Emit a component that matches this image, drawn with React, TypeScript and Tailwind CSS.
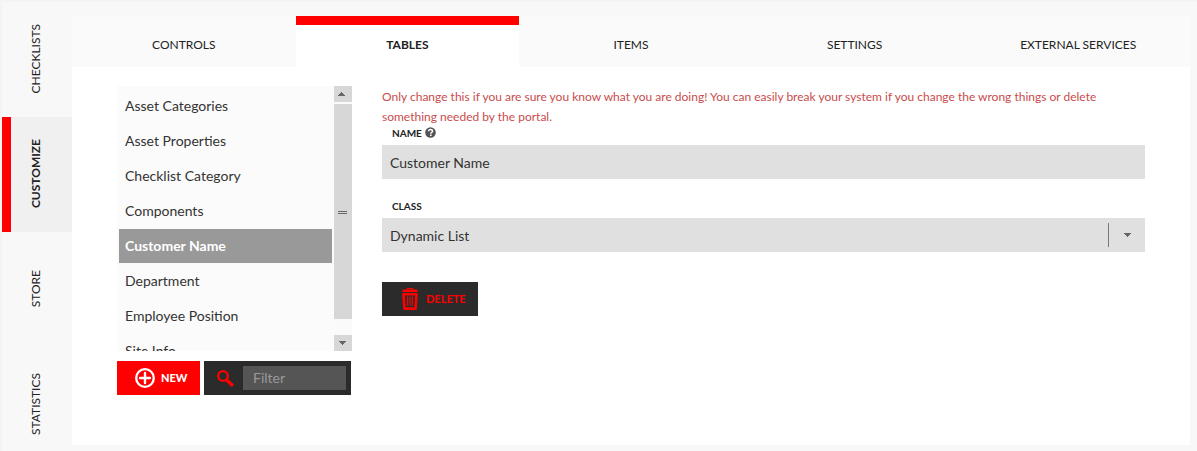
import React, { useState } from 'react';

interface TableEntry {
  name: string;
  className: string;
}

const sideTabs = ['CHECKLISTS', 'CUSTOMIZE', 'STORE', 'STATISTICS'];

const topTabs = ['CONTROLS', 'TABLES', 'ITEMS', 'SETTINGS', 'EXTERNAL SERVICES'];

const tables: TableEntry[] = [
  { name: 'Asset Categories', className: 'Dynamic List' },
  { name: 'Asset Properties', className: 'Dynamic List' },
  { name: 'Checklist Category', className: 'Dynamic List' },
  { name: 'Components', className: 'Dynamic List' },
  { name: 'Customer Name', className: 'Dynamic List' },
  { name: 'Department', className: 'Dynamic List' },
  { name: 'Employee Position', className: 'Dynamic List' },
  { name: 'Site Info', className: 'Dynamic List' }
];

const PlusIcon: React.FC = () => (
  <svg className="w-5 h-5" viewBox="0 0 20 20" fill="none" stroke="currentColor" aria-hidden="true">
    <circle cx="10" cy="10" r="8.8" strokeWidth="2.3" />
    <path d="M10 5v10M5 10h10" strokeWidth="2.4" strokeLinecap="round" />
  </svg>
);

const SearchIcon: React.FC = () => (
  <svg className="w-[17px] h-[17px]" viewBox="0 0 17 17" fill="none" stroke="currentColor" aria-hidden="true">
    <circle cx="6" cy="6" r="4.8" strokeWidth="2.3" />
    <path d="M9.4 9.6l1.6 1.6" strokeWidth="2.4" />
    <path d="M11 11.2l3.8 3.6" strokeWidth="3.6" strokeLinecap="round" />
  </svg>
);

const TrashIcon: React.FC = () => (
  <svg className="w-4 h-[22px]" viewBox="0 0 16 22" fill="none" stroke="currentColor" aria-hidden="true">
    <path d="M5.5 1.6V0.6h5v1" strokeWidth="1.2" />
    <path d="M1 1.6h14l1 2.4H0z" fill="currentColor" stroke="none" />
    <path d="M1.5 6.2h13l-1 14.4H2.5z" strokeWidth="2.6" strokeLinejoin="round" />
    <path d="M5.6 8.6v9.2M8 8.6v9.2M10.4 8.6v9.2" strokeWidth="1.2" />
  </svg>
);

const HelpIcon: React.FC = () => (
  <svg className="w-[11px] h-[11px]" viewBox="0 0 11 11" aria-hidden="true">
    <circle cx="5.5" cy="5.5" r="5.3" fill="#555" />
    <path
      d="M3.6 4.3c0-1.2 0.8-1.8 1.9-1.8s2 0.7 2 1.7c0 1.3-1.7 1.3-1.7 2.5"
      fill="none"
      stroke="#fff"
      strokeWidth="1.5"
    />
    <path d="M5 7.5h1.6v1.4H5z" fill="#fff" />
  </svg>
);

const Arrow: React.FC<{ up?: boolean }> = ({ up }) => (
  <svg className="w-[7px] h-1" viewBox="0 0 7 4" fill="#666" shapeRendering="crispEdges" aria-hidden="true">
    <path
      d={
        up
          ? 'M3 0h1v1h1v1h1v1h1v1H0V3h1V2h1V1h1z'
          : 'M0 0h7v1H6v1H5v1H4v1H3V3H2V2H1V1H0z'
      }
    />
  </svg>
);

const App: React.FC = () => {
  const [section, setSection] = useState('CUSTOMIZE');
  const [tab, setTab] = useState('TABLES');
  const [selected, setSelected] = useState('Customer Name');
  const [filter, setFilter] = useState('');

  const current = tables.find((t) => t.name === selected);
  const visible = tables.filter((t) => t.name.toLowerCase().includes(filter.toLowerCase()));

  return (
    <div className="flex h-screen overflow-hidden bg-[#f8f8f8] border-t-2 border-l-2 border-[#f4f4f4] font-[Lato,sans-serif] text-[#222]">
      {/* Section tabs down the left edge */}
      <nav className="w-[70px] shrink-0">
        {sideTabs.map((name) => (
          <button
            key={name}
            onClick={() => setSection(name)}
            className={`flex w-full h-[115px] items-center justify-center border-l-9 pr-3 pb-0.5 text-xs ${
              section === name ? 'border-[#f00] bg-[#f0f0f0] font-bold' : 'border-transparent'
            }`}
          >
            <span className="rotate-180 [writing-mode:vertical-rl]">{name}</span>
          </button>
        ))}
      </nav>

      <main className="flex flex-1 flex-col bg-white mt-3.5 mr-[7px] mb-1.5">
        {/* Top tabs */}
        <div className="grid grid-cols-5 shrink-0">
          {topTabs.map((name) => (
            <button
              key={name}
              onClick={() => setTab(name)}
              className={`h-[51px] border-t-9 pb-0.5 text-xs ${
                tab === name ? 'border-[#f00] bg-white font-bold' : 'border-[#fafafa] bg-[#fafafa]'
              }`}
            >
              {name}
            </button>
          ))}
        </div>

        <div className="flex gap-[30px] px-[45px] pt-[19px]">
          {/* Table list */}
          <div className="w-[235px] shrink-0">
            <div className="flex h-[265px]">
              <ul className="flex flex-1 flex-col gap-px overflow-hidden bg-[#fbfbfb] px-0.5 pt-[3px]">
                {visible.map((t) => (
                  <li key={t.name}>
                    <button
                      onClick={() => setSelected(t.name)}
                      className={`w-full h-[34px] px-1.5 text-left text-sm ${
                        selected === t.name ? 'bg-[#999] font-bold text-white' : 'text-[#333]'
                      }`}
                    >
                      {t.name}
                    </button>
                  </li>
                ))}
              </ul>
              <div className="flex w-[18px] flex-col bg-[#fafafa]">
                <button aria-label="Scroll up" className="flex h-4 items-center justify-center bg-[#d7d7d7] pr-[3px]">
                  <Arrow up />
                </button>
                <div className="mt-0.5 flex h-[215px] flex-col items-center justify-center gap-px bg-[#d7d7d7] pt-0.5 pr-px">
                  <div className="h-px w-[9px] bg-[#666]" />
                  <div className="h-px w-[9px] bg-[#666]" />
                </div>
                <button
                  aria-label="Scroll down"
                  className="mt-auto flex h-4 items-center justify-center bg-[#d7d7d7] pr-px"
                >
                  <Arrow />
                </button>
              </div>
            </div>

            <div className="mt-2.5 mr-px flex gap-1">
              <button className="flex h-[34px] w-[83px] items-center gap-1.5 bg-[#f00] pl-[18px] text-[11px] font-black text-white">
                <PlusIcon />
                NEW
              </button>
              <label className="flex h-[34px] flex-1 items-center gap-[9px] bg-[#2b2b2b] pl-[13px] pr-[5px] text-[#f00]">
                <SearchIcon />
                <input
                  type="text"
                  aria-label="Filter"
                  placeholder="Filter"
                  value={filter}
                  onChange={(e) => setFilter(e.target.value)}
                  className="h-6 w-full min-w-0 flex-1 bg-[#555] px-2.5 pb-0.5 text-sm text-white placeholder:text-[#999] outline-none"
                />
              </label>
            </div>
          </div>

          {/* Details form */}
          <form className="flex-1" onSubmit={(e) => e.preventDefault()}>
            <p className="pt-px text-xs leading-5 text-[#c94c4c]">
              Only change this if you are sure you know what you are doing! You can easily break your system if you
              change the wrong things or delete something needed by the portal.
            </p>

            <label htmlFor="table-name" className="flex h-[18px] items-start gap-[3px] pl-2.5 text-[10px] leading-3 font-bold">
              NAME
              <HelpIcon />
            </label>
            <input
              id="table-name"
              type="text"
              key={selected}
              defaultValue={selected}
              className="block h-[34px] w-full bg-[#e0e0e0] px-2 text-sm text-[#333] outline-none"
            />

            <label htmlFor="table-class" className="mt-[21px] flex h-[18px] items-start pl-2.5 text-[10px] leading-3 font-bold">
              CLASS
            </label>
            <div className="relative">
              <select
                id="table-class"
                defaultValue={current?.className}
                className="block h-[34px] w-full appearance-none bg-[#e0e0e0] px-2 pt-0.5 text-sm text-[#333] outline-none"
              >
                <option>Dynamic List</option>
                <option>Static List</option>
              </select>
              <div className="pointer-events-none absolute inset-y-[5px] right-0 flex w-[37px] items-center justify-center border-l border-[#777]">
                <Arrow />
              </div>
            </div>

            <button
              type="button"
              className="mt-[30px] flex h-[34px] w-24 items-center gap-2 bg-[#2b2b2b] pl-5 text-[11px] font-bold text-[#f00]"
            >
              <TrashIcon />
              DELETE
            </button>
          </form>
        </div>
      </main>
    </div>
  );
};

export default App;
